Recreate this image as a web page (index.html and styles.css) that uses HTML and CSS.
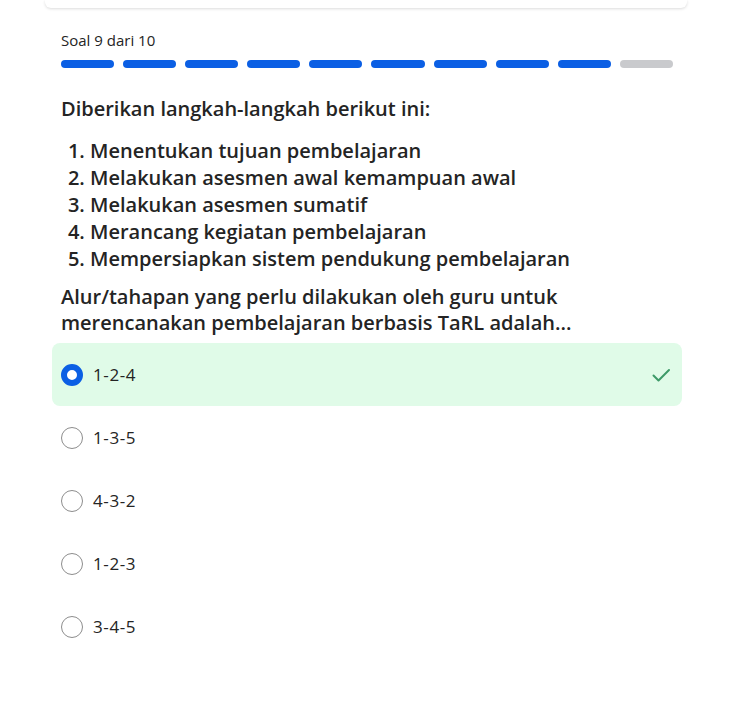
FILE: index.html
```html
<!DOCTYPE html>
<html lang="id">
<head>
<meta charset="utf-8">
<link rel="stylesheet" href="styles.css">
</head>
<body>
<div class="page">
  <div class="topcard"></div>
  <div class="content">
    <div class="counter">Soal 9 dari 10</div>
    <div class="progress">
      <span class="seg done"></span><span class="seg done"></span><span class="seg done"></span><span class="seg done"></span><span class="seg done"></span><span class="seg done"></span><span class="seg done"></span><span class="seg done"></span><span class="seg done"></span><span class="seg"></span>
    </div>
    <p class="q-intro">Diberikan langkah-langkah berikut ini:</p>
    <ol class="steps">
      <li>Menentukan tujuan pembelajaran</li>
      <li>Melakukan asesmen awal kemampuan awal</li>
      <li>Melakukan asesmen sumatif</li>
      <li>Merancang kegiatan pembelajaran</li>
      <li>Mempersiapkan sistem pendukung pembelajaran</li>
    </ol>
    <p class="q-text">Alur/tahapan yang perlu dilakukan oleh guru untuk merencanakan pembelajaran berbasis TaRL adalah...</p>
  </div>
  <div class="options">
    <div class="option selected">
      <span class="radio"></span><span class="label">1-2-4</span>
      <svg class="check" width="20" height="20" viewBox="0 0 20 20"><path d="M2.5 10.5 L7.5 15.5 L18 5" fill="none" stroke="#3d9a68" stroke-width="2" stroke-linecap="round" stroke-linejoin="round"/></svg>
    </div>
    <div class="option"><span class="radio"></span><span class="label">1-3-5</span></div>
    <div class="option"><span class="radio"></span><span class="label">4-3-2</span></div>
    <div class="option"><span class="radio"></span><span class="label">1-2-3</span></div>
    <div class="option"><span class="radio"></span><span class="label">3-4-5</span></div>
  </div>
</div>
</body>
</html>
```

FILE: styles.css
```css
html, body {
  margin: 0;
  padding: 0;
  background: #ffffff;
}
body {
  font-family: "Open Sans", "Noto Sans", "Liberation Sans", sans-serif;
  color: #242424;
}
.page {
  width: 642px;
  margin-left: 45px;
}
.topcard {
  height: 8px;
  background: #fff;
  box-shadow: 0 1px 3px rgba(0, 0, 0, 0.14);
  border-radius: 0 0 6px 6px;
}
.content {
  padding: 0 14px 0 16px;
}
.counter {
  margin-top: 22px;
  font-size: 15px;
  line-height: 20px;
}
.progress {
  margin-top: 10px;
  display: flex;
  gap: 9px;
  width: 612px;
}
.seg {
  flex: 1;
  height: 8px;
  border-radius: 4px;
  background: #c9cacd;
}
.seg.done {
  background: #0b5fe4;
}
.q-intro {
  margin: 28px 0 0;
  font-size: 20px;
  line-height: 26px;
  font-weight: 600;
}
.steps {
  margin: 15px 0 0;
  padding-left: 29px;
  font-size: 20px;
  line-height: 27px;
  font-weight: 600;
}
.q-text {
  margin: 12px 0 0;
  font-size: 20px;
  line-height: 26px;
  font-weight: 600;
  width: 530px;
}
.options {
  margin-top: 7px;
  margin-left: 7px;
  width: 630px;
  display: flex;
  flex-direction: column;
}
.option {
  height: 63px;
  display: flex;
  align-items: center;
  padding: 0 11px 0 9px;
  border-radius: 8px;
  box-sizing: border-box;
}
.option.selected {
  background: #e0fbe8;
}
.radio {
  width: 22px;
  height: 22px;
  box-sizing: border-box;
  border: 1.5px solid #8d8d8d;
  border-radius: 50%;
  background: #fff;
  flex: none;
}
.option.selected .radio {
  border: 6px solid #0b5fe4;
}
.label {
  margin-left: 10px;
  font-size: 17px;
  line-height: 22px;
  letter-spacing: 0.6px;
}
.check {
  margin-left: auto;
}
```
